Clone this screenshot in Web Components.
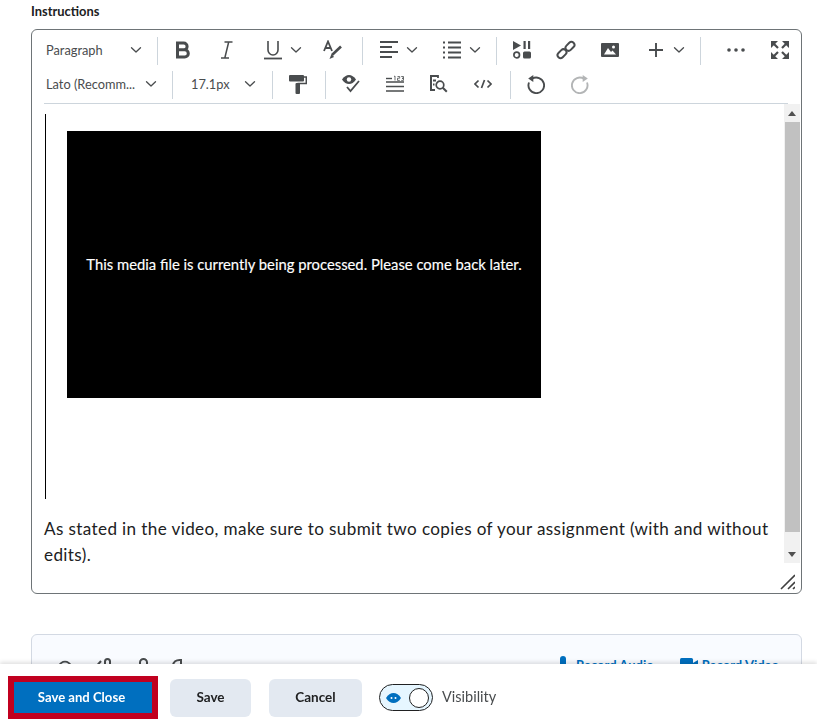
<!DOCTYPE html>
<html lang="en"><head><meta charset="utf-8"><title>Instructions</title>
<style>
html,body{margin:0;padding:0;background:#fff;height:727px;overflow:hidden;font-family:Lato,"Liberation Sans",sans-serif;color:#202122}
</style></head><body>
<assign-form>
  <rte-editor label="Instructions">
    <tb-row slot="toolbar">
      <tb-select w="125" pl="14" pr="15">Paragraph</tb-select><tb-sep></tb-sep>
      <tb-btn w="42" ml="4" icon="bold"></tb-btn><tb-btn w="42" ml="2" icon="italic"></tb-btn>
      <tb-btn w="24" ml="13" icon="underline"></tb-btn><tb-btn w="22" icon="chev"></tb-btn>
      <tb-btn w="42" ml="5" icon="color"></tb-btn><tb-sep ml="8"></tb-sep>
      <tb-btn w="24" ml="14" icon="align"></tb-btn><tb-btn w="22" icon="chev"></tb-btn>
      <tb-btn w="24" ml="17" icon="list"></tb-btn><tb-btn w="22" icon="chev"></tb-btn><tb-sep ml="10"></tb-sep>
      <tb-btn w="42" ml="4" icon="media"></tb-btn><tb-btn w="42" ml="2" icon="link"></tb-btn><tb-btn w="42" ml="2" icon="image"></tb-btn>
      <tb-btn w="24" ml="13" icon="plus"></tb-btn><tb-btn w="22" icon="chev"></tb-btn><tb-sep ml="10"></tb-sep>
      <tb-btn w="42" ml="14" icon="dots"></tb-btn><tb-btn w="42" ml="2" icon="expand"></tb-btn>
    </tb-row>
    <tb-row slot="toolbar">
      <tb-select w="140" pl="14" pr="15">Lato (Recomm...</tb-select><tb-sep></tb-sep>
      <tb-select w="99" pl="18" pr="16">17.1px</tb-select><tb-sep></tb-sep>
      <tb-btn w="42" ml="4" icon="paint"></tb-btn><tb-sep ml="6"></tb-sep>
      <tb-btn w="42" ml="4" icon="a11y"></tb-btn><tb-btn w="42" ml="2" icon="count"></tb-btn><tb-btn w="42" ml="2" icon="find"></tb-btn><tb-btn w="42" ml="2" icon="code"></tb-btn><tb-sep ml="6"></tb-sep>
      <tb-btn w="42" ml="4" icon="undo"></tb-btn><tb-btn w="42" ml="2" icon="redo"></tb-btn>
    </tb-row>
    <media-block>This media file is currently being processed. Please come back later.</media-block>
    <p style="margin:17px 0 0;font:17.1px/26px Lato,'Liberation Sans',sans-serif;letter-spacing:.38px;color:#202122">As stated in the video, make sure to submit two copies of your assignment (with and without edits).</p>
  </rte-editor>
  <attach-box></attach-box>
</assign-form>
<action-bar>
  <act-btn primary focus>Save and Close</act-btn>
  <act-btn w="81" ml="12">Save</act-btn>
  <act-btn w="93" ml="18">Cancel</act-btn>
  <vis-switch>Visibility</vis-switch>
</action-bar>
<script>
const FONT='Lato,"Liberation Sans",sans-serif';
const C='#494c4e';
const ICONS={
chev:`<svg width="12" height="8" viewBox="0 0 12 8" fill="none" stroke="${C}" stroke-width="1.300" stroke-linecap="round" stroke-linejoin="round"><path d="M1.500 1.700 6 6l4.500-4.300"/></svg>`,
bold:`<svg width="16" height="18" viewBox="0 0 16 18" fill="none" stroke="${C}" stroke-width="3"><path d="M2.500 2h6.200a3.400 3.400 0 0 1 0 6.800H2.500zM2.500 8.800h7.200a3.600 3.600 0 0 1 0 7.200H2.500z"/></svg>`,
italic:`<svg width="14" height="18" viewBox="0 0 14 18" fill="none" stroke="${C}" stroke-width="1.500"><path d="M4.500 1h8M1 17h8M8.700 1 4.800 17"/></svg>`,
underline:`<svg width="18" height="20" viewBox="0 0 18 20" fill="none" stroke="${C}"><path d="M4 1v9a5 5 0 0 0 10 0V1" stroke-width="1.600"/><path d="M0 18.500h18" stroke-width="1.800"/></svg>`,
color:`<svg width="20" height="20" viewBox="0 0 20 20" fill="none" stroke="${C}"><path d="M1 11 5 1.500 9 11M2.500 8h5" stroke-width="1.800"/><path d="M18 6.500 9 15" stroke-width="2.600"/><path d="M8.500 14 6.500 19l4.500-2z" fill="${C}" stroke="none"/></svg>`,
align:`<svg width="18" height="18" viewBox="0 0 18 18" stroke="${C}" stroke-width="1.800"><path d="M0 1h18M0 6h12M0 11h18M0 16h12"/></svg>`,
list:`<svg width="18" height="18" viewBox="0 0 18 18" stroke="${C}" stroke-width="1.800"><path d="M5 1.500h13M5 6.500h13M5 11.500h13M5 16.500h13M0 1.500h2M0 6.500h2M0 11.500h2M0 16.500h2"/></svg>`,
media:`<svg width="18" height="18" viewBox="0 0 18 18" fill="${C}"><path d="M0 0l8 4.500L0 9z"/><rect x="10.500" y="0" width="2.200" height="8"/><rect x="15" y="0" width="2.200" height="8"/><circle cx="3.700" cy="14" r="2.800" fill="none" stroke="${C}" stroke-width="1.700"/><rect x="10" y="10.500" width="8" height="7" rx="1.500"/></svg>`,
link:`<svg width="20" height="20" viewBox="0 0 20 20" fill="none" stroke="${C}" stroke-width="2"><rect x="9" y="3.300" width="10" height="6" rx="3" transform="rotate(-45 14 6.300)"/><rect x="1" y="10.700" width="10" height="6" rx="3" transform="rotate(-45 6 13.700)"/></svg>`,
image:`<svg width="18" height="14" viewBox="0 0 18 14"><rect width="18" height="14" rx="1" fill="${C}"/><path d="M3 11.500 7 5l3 4 1.500-1.500 3.500 4z" fill="#fff"/><circle cx="12.500" cy="4" r="1.500" fill="#fff"/></svg>`,
plus:`<svg width="14" height="14" viewBox="0 0 14 14" stroke="${C}" stroke-width="1.900"><path d="M7 0v14M0 7h14"/></svg>`,
dots:`<svg width="18" height="4" viewBox="0 0 18 4" fill="${C}"><circle cx="2" cy="2" r="1.800"/><circle cx="9" cy="2" r="1.800"/><circle cx="16" cy="2" r="1.800"/></svg>`,
expand:`<svg width="18" height="18" viewBox="0 0 18 18" fill="${C}"><path d="M0 0h7L0 7zM18 0v7l-7-7zM0 18v-7l7 7zM18 18h-7l7-7z"/><path d="M3 3l4 4M15 3l-4 4M3 15l4-4M15 15l-4-4" stroke="${C}" stroke-width="2.200"/></svg>`,
paint:`<svg width="18" height="19" viewBox="0 0 18 19" fill="${C}"><rect width="15" height="6.500" rx="1"/><path d="M15 2h2.300v6.500H8.500" fill="none" stroke="${C}" stroke-width="1.500"/><rect x="6.500" y="8" width="4.500" height="11" rx="1"/></svg>`,
a11y:`<svg width="18" height="18" viewBox="0 0 18 18"><path d="M0 4.500C2 1.500 4.500 0 7 0s5 1.500 7 4.500C12 7.500 9.500 9 7 9S2 7.500 0 4.500z" fill="${C}"/><circle cx="7" cy="4.500" r="2.200" fill="#fff"/><path d="m5 12 3.500 4L17 6" fill="none" stroke="${C}" stroke-width="1.800"/></svg>`,
count:`<svg width="18" height="18" viewBox="0 0 18 18" stroke="${C}" fill="none"><path d="M0 8h18M0 12.500h18M0 17h18" stroke-width="1.600" transform="translate(0 -1)"/><path d="M0 3.500h6" stroke-width="1.400"/><path d="M8 1.500l1-.5v4.500M11.500 1.500h2.200v1.700h-2.200v2.200h2.300M15.200 1.500h2.300v1.800h-1.500 1.500v2.100h-2.300" stroke-width=".8"/></svg>`,
find:`<svg width="18" height="18" viewBox="0 0 18 18" fill="none" stroke="${C}"><path d="M8 1H1v14h4M3 5.500h3M3 9.500h1.500" stroke-width="2"/><path d="M1 1h7v2" stroke-width="1.800"/><circle cx="10" cy="10" r="3.800" stroke-width="1.700"/><path d="m12.800 12.800 4 4" stroke-width="2"/></svg>`,
code:`<svg width="18" height="10" viewBox="0 0 18 10" fill="none" stroke="${C}" stroke-width="1.700"><path d="M4.500 1.500 1 5l3.500 3.500M13.500 1.500 17 5l-3.500 3.500M10.500 1 7.500 9"/></svg>`,
undo:`<svg width="18" height="19" viewBox="0 0 18 19" fill="none" stroke="${C}" stroke-width="1.900"><path d="M5 3.800A7.800 7.800 0 1 1 2 7.500"/><path d="M6.300 0 1.200 3.500l5.100 3.500z" fill="${C}" stroke="none"/></svg>`,
redo:`<svg width="18" height="19" viewBox="0 0 18 19" fill="none" stroke="#b3b5b6" stroke-width="1.900"><path d="M13 3.800A7.800 7.800 0 1 0 16 7.500"/><path d="M11.700 0 16.800 3.500 11.700 7z" fill="#b3b5b6" stroke="none"/></svg>`
};
function def(name,css,html,init){
  customElements.define(name,class extends HTMLElement{
    constructor(){super();this.attachShadow({mode:'open'}).innerHTML=`<style>${css}</style>${html}`;}
    connectedCallback(){if(init)init(this);}
  });
}
def('assign-form',`:host{display:block;padding:0 15px 0 31px}`,`<slot></slot>`);
def('rte-editor',`
:host{display:block}
.lbl{font:700 12.900px/16px ${FONT};color:#202122;padding-top:3px;height:29px;box-sizing:border-box}
.box{height:565px;box-sizing:border-box;border:1px solid #6e7477;border-radius:6px;display:flex;flex-direction:column;position:relative}
.tb{padding-top:3px;height:73px;box-sizing:border-box;margin:0 12px}
.tb ::slotted(*){margin-left:-12px}
.rule{height:1px;background:#cdd5dc;margin:0 13px 0 12px}
.main{display:flex;height:459px}
.doc{flex:1;padding:0 0 0 12px;min-width:0;overflow:hidden}
.sb{width:16px;margin-right:1px;background:#f1f1f1;display:flex;flex-direction:column;align-items:center}
.sb i{display:block;width:0;height:0;border:4px solid transparent}
.up{margin-top:7px;border-bottom:5px solid #505050!important;border-top-width:0!important}
.th{width:15px;height:410px;background:#c1c1c1;margin-top:6px}
.dn{margin-top:20px;border-top:5px solid #505050!important;border-bottom-width:0!important}
.grip{position:absolute;right:6px;bottom:3px}
`,`<div class="lbl" id="l"></div><div class="box"><div class="tb"><slot name="toolbar"></slot></div><div class="rule"></div>
<div class="main"><div class="doc"><slot></slot></div><div class="sb"><i class="up"></i><div class="th"></div><i class="dn"></i></div></div>
<svg class="grip" width="15" height="17" viewBox="0 0 15 17" fill="none" stroke="#404040" stroke-width="1.600"><path d="M1 16 15 2M8 16l7-7M13 16l2-2"/></svg></div>`,
el=>{el.shadowRoot.getElementById('l').textContent=el.getAttribute('label');});
def('tb-row',`:host{display:flex;align-items:center;height:34px}`,`<slot></slot>`);
def('tb-sep',`:host{display:block;width:1px;height:28px;margin-top:2px;background:#cdd5dc;flex:none}`,``,el=>{el.style.marginLeft=(el.getAttribute('ml')||0)+'px'});
def('tb-btn',`:host{display:flex;align-items:center;justify-content:center;height:34px;flex:none}svg{display:block}`,`<span id="i"></span>`,
el=>{el.style.width=el.getAttribute('w')+'px';el.style.marginLeft=(el.getAttribute('ml')||0)+'px';const s=el.shadowRoot.getElementById('i');s.style.display='block';s.innerHTML=ICONS[el.getAttribute('icon')];});
def('tb-select',`:host{display:flex;align-items:center;justify-content:space-between;height:34px;box-sizing:border-box;flex:none;font:12.800px/20px ${FONT};color:#494c4e}svg{display:block}.t{margin-bottom:1px}`,`<span class="t"><slot></slot></span><span id="i"></span>`,
el=>{el.style.width=el.getAttribute('w')+'px';el.style.paddingLeft=el.getAttribute('pl')+'px';el.style.paddingRight=el.getAttribute('pr')+'px';el.shadowRoot.getElementById('i').innerHTML=ICONS.chev;});
def('media-block',`
:host{display:block;border-left:1px solid #000;height:385px;margin:10px 0 0 1px;padding:17px 0 0 21px;box-sizing:border-box}
.v{width:474px;height:267px;box-sizing:border-box;padding-bottom:2px;background:#000;color:#fff;display:flex;align-items:center;justify-content:center;font:14.800px/20px ${FONT};text-align:center;-webkit-text-stroke:.15px #fff}
`,`<div class="v"><slot></slot></div>`);
def('attach-box',`:host{display:block;margin-top:40px;height:60px;box-sizing:border-box;border:1px solid #d3d9e3;border-radius:6px;background:#f9fbff;position:relative;overflow:hidden}
.r{display:flex;align-items:center;padding:20px 22px 0 24px;height:20px;font:700 13px/20px ${FONT};color:#006fbf;justify-content:flex-end;gap:26px}
.r span{display:flex;align-items:center}
.l{position:absolute;left:25px;top:23px;display:flex}`,
`<div class="l">
<svg width="16" height="18" viewBox="0 0 18 18" fill="none" stroke="${C}" stroke-width="2"><path d="M1 9c2-3.500 5-6 8-6s6 2.500 8 6c-2 3.500-5 6-8 6s-6-2.500-8-6z"/><circle cx="9" cy="9" r="2"/></svg>
<svg width="18" height="18" viewBox="0 0 18 18" fill="none" stroke="${C}" stroke-width="2" style="margin-left:21px"><path d="M1 10 7 3"/><rect x="11" y="1" width="5" height="10" rx="2.500"/></svg>
<svg width="10" height="18" viewBox="0 0 10 18" fill="none" stroke="${C}" stroke-width="2" style="margin-left:27px"><rect x="1" y="1" width="7" height="9" rx="3.500"/></svg>
<svg width="10" height="18" viewBox="0 0 10 18" fill="none" stroke="${C}" stroke-width="2" style="margin-left:23px"><path d="M1 8C1 4 4 1.500 9 2v6"/></svg>
</div><div class="r"><span><svg width="14" height="18" viewBox="0 0 14 18" fill="#006fbf" style="margin-right:6px"><rect x="4" y="0" width="6" height="12" rx="3"/><path d="M1 8v2a6 6 0 0 0 12 0V8" fill="none" stroke="#006fbf" stroke-width="1.600"/></svg>Record Audio</span><span><svg width="18" height="14" viewBox="0 0 18 14" fill="#006fbf" style="margin-right:4px"><rect width="13" height="12" rx="1.500"/><path d="M13 5l5-3v9l-5-3z"/></svg>Record Video</span></div>`);
def('action-bar',`:host{display:flex;align-items:center;position:fixed;left:0;right:0;bottom:0;height:63px;background:#fff;box-shadow:0 -2px 4px rgba(0,0,0,.12);padding:4px 0 0 8px;box-sizing:border-box}`,`<slot></slot>`);
def('act-btn',`:host{display:flex;align-items:center;justify-content:center;height:38px;box-sizing:border-box;padding-bottom:2px;border-radius:6px;background:#e3e9f1;font:700 13.500px/20px ${FONT};color:#202122;flex:none}
:host([primary]){width:150px;height:43px;border-radius:0;background:#006fbf;color:#fff;border:6px solid #c1001f;font-size:13.100px;padding-right:3px}`,`<slot></slot>`,
el=>{if(el.hasAttribute('w'))el.style.width=el.getAttribute('w')+'px';if(el.hasAttribute('ml'))el.style.marginLeft=el.getAttribute('ml')+'px';});
def('vis-switch',`:host{display:flex;align-items:center;margin-left:17px;font:14.500px/20px ${FONT};color:#494c4e;gap:9px}
.l{margin-bottom:2px}
.t{width:54px;height:27px;box-sizing:border-box;border:1.500px solid #202122;border-radius:14px;background:#e6f6ff;display:flex;align-items:center;justify-content:space-between;padding:0 3px 0 6px}
.k{width:20px;height:20px;box-sizing:border-box;border-radius:50%;background:#fff;border:1.500px solid #202122}`,
`<div class="t"><svg width="15" height="10" viewBox="0 0 15 10"><path d="M0 5C2 1.700 4.700 0 7.500 0S13 1.700 15 5c-2 3.300-4.700 5-7.500 5S2 8.300 0 5z" fill="#006fbf"/><circle cx="5.500" cy="5" r="1" fill="#fff"/><circle cx="9.500" cy="5" r="1" fill="#fff"/></svg><div class="k"></div></div><span class="l"><slot></slot></span>`);
</script>
</body></html>
